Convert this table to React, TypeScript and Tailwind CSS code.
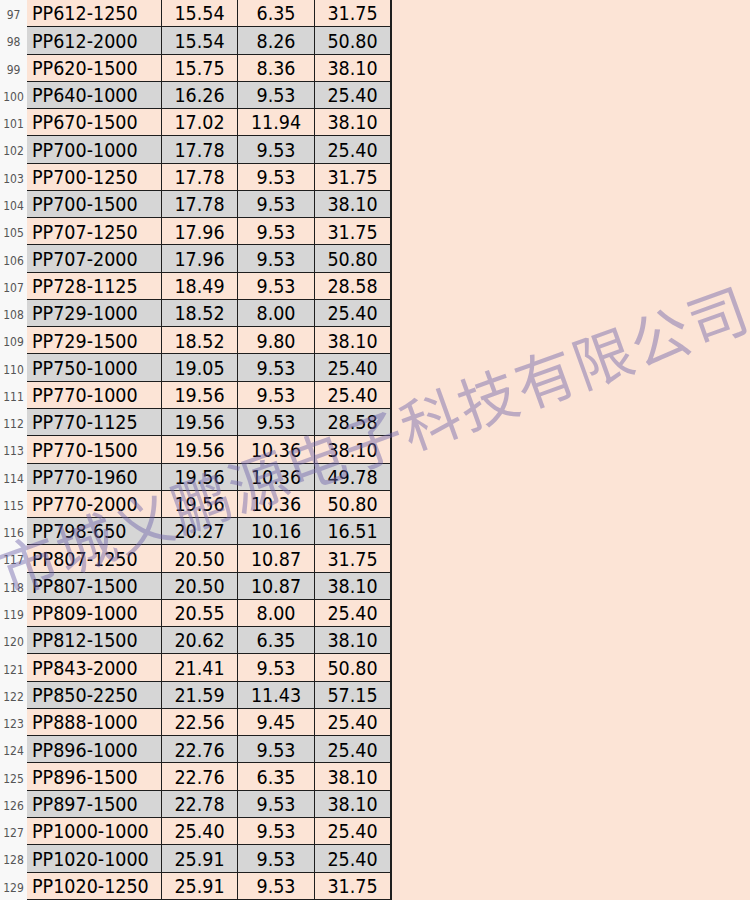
import React from "react";

type Row = [number, string, string, string, string];

const rows: Row[] = [
  [97, "PP612-1250", "15.54", "6.35", "31.75"],
  [98, "PP612-2000", "15.54", "8.26", "50.80"],
  [99, "PP620-1500", "15.75", "8.36", "38.10"],
  [100, "PP640-1000", "16.26", "9.53", "25.40"],
  [101, "PP670-1500", "17.02", "11.94", "38.10"],
  [102, "PP700-1000", "17.78", "9.53", "25.40"],
  [103, "PP700-1250", "17.78", "9.53", "31.75"],
  [104, "PP700-1500", "17.78", "9.53", "38.10"],
  [105, "PP707-1250", "17.96", "9.53", "31.75"],
  [106, "PP707-2000", "17.96", "9.53", "50.80"],
  [107, "PP728-1125", "18.49", "9.53", "28.58"],
  [108, "PP729-1000", "18.52", "8.00", "25.40"],
  [109, "PP729-1500", "18.52", "9.80", "38.10"],
  [110, "PP750-1000", "19.05", "9.53", "25.40"],
  [111, "PP770-1000", "19.56", "9.53", "25.40"],
  [112, "PP770-1125", "19.56", "9.53", "28.58"],
  [113, "PP770-1500", "19.56", "10.36", "38.10"],
  [114, "PP770-1960", "19.56", "10.36", "49.78"],
  [115, "PP770-2000", "19.56", "10.36", "50.80"],
  [116, "PP798-650", "20.27", "10.16", "16.51"],
  [117, "PP807-1250", "20.50", "10.87", "31.75"],
  [118, "PP807-1500", "20.50", "10.87", "38.10"],
  [119, "PP809-1000", "20.55", "8.00", "25.40"],
  [120, "PP812-1500", "20.62", "6.35", "38.10"],
  [121, "PP843-2000", "21.41", "9.53", "50.80"],
  [122, "PP850-2250", "21.59", "11.43", "57.15"],
  [123, "PP888-1000", "22.56", "9.45", "25.40"],
  [124, "PP896-1000", "22.76", "9.53", "25.40"],
  [125, "PP896-1500", "22.76", "6.35", "38.10"],
  [126, "PP897-1500", "22.78", "9.53", "38.10"],
  [127, "PP1000-1000", "25.40", "9.53", "25.40"],
  [128, "PP1020-1000", "25.91", "9.53", "25.40"],
  [129, "PP1020-1250", "25.91", "9.53", "31.75"],
];

function SheetRow({ row }: { row: Row }) {
  const [num, part, a, b, c] = row;
  const fill = num % 2 === 0 ? "bg-[#d6d6d6]" : "bg-[#fce4d6]";
  return (
    <div className="flex h-[27.27px]">
      {/* row header */}
      <div className="w-[27px] bg-[#f8f8f8] flex items-center justify-center pt-[3px] text-[12px] text-[#555]">
        {num}
      </div>
      <div className={`flex ${fill} border-b border-[#1e1e1e] text-[19.5px] leading-none text-black`}>
        <div className="w-[135px] border-r border-[#1e1e1e] flex items-center pl-[5px] pt-[2px]">
          {part}
        </div>
        <div className="w-[76px] border-r border-[#1e1e1e] flex items-center justify-center pt-[2px]">
          {a}
        </div>
        <div className="w-[77px] border-r border-[#1e1e1e] flex items-center justify-center pt-[2px]">
          {b}
        </div>
        <div className="w-[77px] border-r-2 border-[#1e1e1e] flex items-center justify-center pt-[2px]">
          {c}
        </div>
      </div>
    </div>
  );
}

export default function App() {
  return (
    <div
      className="relative w-[750px] h-[900px] overflow-hidden bg-[#fce4d6]"
      style={{ fontFamily: '"DejaVu Sans Condensed", "DejaVu Sans", sans-serif' }}
    >
      <div className="flex flex-col w-[392px]">
        {rows.map((r) => (
          <SheetRow key={r[0]} row={r} />
        ))}
      </div>

      {/* watermark */}
      <div
        className="absolute left-0 top-[542px] h-[60px] leading-[60px] whitespace-nowrap text-[59px] font-normal tracking-[2px] text-[rgba(110,100,170,0.45)] origin-[0_50%] rotate-[-19.8deg] pointer-events-none"
        style={{ fontFamily: '"Noto Sans CJK SC", sans-serif' }}
      >
        市城义鹏源电子科技有限公司
      </div>
    </div>
  );
}
